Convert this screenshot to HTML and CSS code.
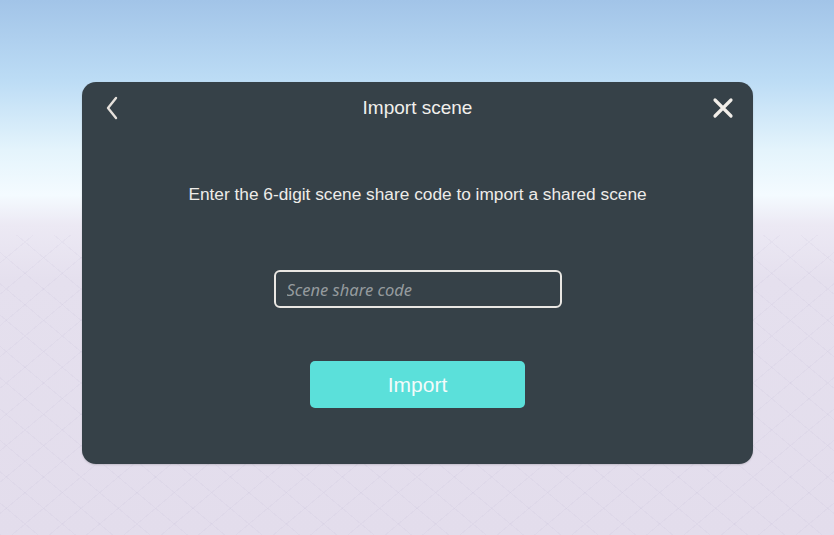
FILE: index.html
```html
<!DOCTYPE html>
<html lang="en">

<head>
    <meta charset="UTF-8">
    <meta name="viewport" content="width=device-width, initial-scale=1.0">
    <title>Import scene</title>
    <link rel="stylesheet" href="styles.css">
</head>

<body>
    <div class="panel">
        <div class="panel-header">
            <button class="icon-btn" type="button" aria-label="Back">
                <svg width="14" height="24" viewBox="0 0 14 24">
                    <path d="M11 2 L3 12 L11 22" fill="none" stroke="#e6e1dc" stroke-width="2.4" stroke-linecap="round" stroke-linejoin="round" />
                </svg>
            </button>
            <h1>Import scene</h1>
            <button class="icon-btn" type="button" aria-label="Close">
                <svg width="22" height="22" viewBox="0 0 22 22">
                    <path d="M3 3 L19 19 M19 3 L3 19" fill="none" stroke="#f2eee9" stroke-width="3.2" stroke-linecap="round" />
                </svg>
            </button>
        </div>

        <p class="hint">Enter the 6-digit scene share code to import a shared scene</p>

        <input type="text" class="code-input" placeholder="Scene share code">

        <button type="button" class="import-btn">Import</button>
    </div>
</body>

</html>
```

FILE: styles.css
```css
* {
    box-sizing: border-box;
}

body {
    margin: 0;
    height: 535px;
    padding: 82px 81px 71px 82px;
    font-family: 'Liberation Sans', Arial, sans-serif;
    background:
        repeating-linear-gradient(40deg, rgba(160, 150, 190, 0.07) 0 1px, transparent 1px 24px),
        repeating-linear-gradient(-40deg, rgba(160, 150, 190, 0.07) 0 1px, transparent 1px 24px),
        linear-gradient(to bottom, #a2c4e8 0px, #bcdcf5 80px, #e4f4fc 150px, #f4fbff 195px, #ece9f4 225px, #e5e0ee 280px, #e3ddec 535px);
    background-size: 100% 300px, 100% 300px, 100% 100%;
    background-position: left bottom, left bottom, left top;
    background-repeat: no-repeat;
    overflow: hidden;
}

.panel {
    height: 100%;
    background: #364148;
    border-radius: 14px;
    display: flex;
    flex-direction: column;
    align-items: center;
    box-shadow: 0 1px 2px rgba(0, 0, 0, 0.15);
}

.panel-header {
    width: 100%;
    height: 52px;
    padding: 0 18px 0 18px;
    display: flex;
    align-items: center;
    justify-content: space-between;
}

.panel-header h1 {
    margin: 0;
    font-size: 19px;
    font-weight: normal;
    color: #f1efec;
}

.icon-btn {
    background: none;
    border: none;
    padding: 0;
    width: 24px;
    height: 24px;
    display: flex;
    align-items: center;
    justify-content: center;
    cursor: pointer;
}

.hint {
    margin: 50px 0 0;
    font-size: 17.3px;
    color: #eeece9;
}

.code-input {
    margin-top: 65px;
    width: 288px;
    height: 38px;
    border: 2px solid #eae7e3;
    border-radius: 6px;
    background: transparent;
    padding: 0 11px;
    font-family: 'Noto Sans', sans-serif;
    font-style: italic;
    font-size: 16.5px;
    color: #eeece9;
}

.code-input::placeholder {
    color: #959b9e;
}

.import-btn {
    margin-top: 53px;
    width: 215px;
    height: 47px;
    border: none;
    border-radius: 5px;
    background: #5be0da;
    color: #f4fbfb;
    font-family: 'Liberation Sans', Arial, sans-serif;
    font-size: 21px;
    cursor: pointer;
}
```
